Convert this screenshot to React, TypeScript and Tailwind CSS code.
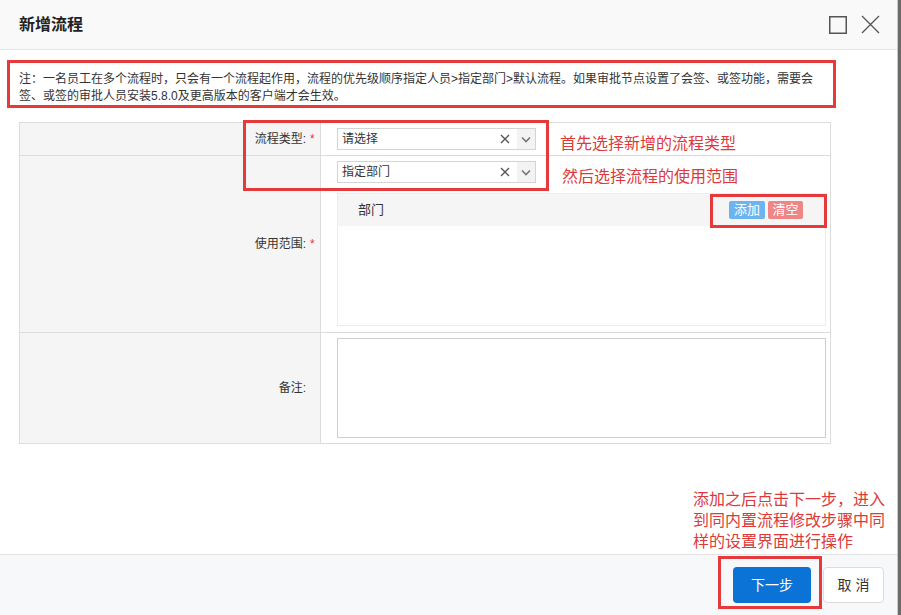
import React from "react";

const red = "#e5393b";

function SelectBox({ value }: { value: string }) {
  return (
    <div className="w-[199px] h-[22px] border border-[#d4d4d4] bg-white flex items-center">
      <span className="flex-1 pl-[4px] text-[12px] leading-[20px] text-[#333]">{value}</span>
      <svg width="10" height="10" viewBox="0 0 10 10" className="mr-[7px]">
        <path d="M1 1 L9 9 M9 1 L1 9" stroke="#555" strokeWidth="1.4" />
      </svg>
      <div className="w-[18px] h-full bg-[#f3f3f3] flex items-center justify-center">
        <svg width="10" height="7" viewBox="0 0 10 7">
          <path d="M1 1.5 L5 5.5 L9 1.5" stroke="#777" strokeWidth="1.6" fill="none" />
        </svg>
      </div>
    </div>
  );
}

function Label({ text, required }: { text: string; required?: boolean }) {
  return (
    <div className="w-[301px] shrink-0 bg-[#f5f5f5] border-r border-[#dcdcdc] flex items-center justify-end pr-[4px] text-[12px] text-[#333]">
      <span>{text}</span>
      <span className={`ml-[4px] w-[6px] text-[#e33] ${required ? "" : "invisible"}`}>*</span>
    </div>
  );
}

export default function App() {
  return (
    <div className="w-[901px] h-[615px] bg-[#6a6a6a] flex overflow-hidden font-['Liberation_Sans','Noto_Sans_CJK_SC',sans-serif]">
      <div className="w-[898px] h-full bg-white border-r border-[#c8c8c8] flex flex-col relative">
        {/* header */}
        <div className="h-[50px] shrink-0 bg-[#f9f9f9] border-b border-[#e6e6e6] flex items-center justify-between pl-[19px] pr-[17px]">
          <h2 className="text-[16px] font-bold text-[#222]">新增流程</h2>
          <div className="flex items-center gap-[14px]">
            <svg width="18" height="18" viewBox="0 0 18 18">
              <rect x="0.75" y="0.75" width="16.5" height="16.5" fill="none" stroke="#555" strokeWidth="1.5" />
            </svg>
            <svg width="19" height="19" viewBox="0 0 19 19">
              <path d="M1 1 L18 18 M18 1 L1 18" stroke="#555" strokeWidth="1.3" />
            </svg>
          </div>
        </div>

        {/* body */}
        <div className="flex-1">
          <div className="mt-[10px] ml-[7px] w-[829px] h-[48px] border-[3px] border-[#e5393b] pl-[9px] pt-[8px] text-[12px] leading-[17px] text-[#333]">
            注：一名员工在多个流程时，只会有一个流程起作用，流程的优先级顺序指定人员&gt;指定部门&gt;默认流程。如果审批节点设置了会签、或签功能，需要会
            <br />
            签、或签的审批人员安装5.8.0及更高版本的客户端才会生效。
          </div>

          <div className="mt-[14px] ml-[19px] w-[812px] border border-[#dcdcdc] border-b-0">
            <div className="h-[33px] flex border-b border-[#dcdcdc]">
              <Label text="流程类型:" required />
              <div className="flex-1 pl-[16px] pt-[5px]">
                <SelectBox value="请选择" />
              </div>
            </div>
            <div className="h-[177px] flex border-b border-[#dcdcdc]">
              <Label text="使用范围:" required />
              <div className="flex-1 pl-[16px] pt-[5px]">
                <SelectBox value="指定部门" />
                <div className="mt-[10px] w-[489px] h-[133px] border border-[#ececec]">
                  <div className="h-[32px] bg-[#f5f5f5] flex items-center justify-between pl-[20px] pr-[22px]">
                    <span className="text-[13px] text-[#333]">部门</span>
                    <div className="flex gap-[3px]">
                      <span className="w-[36px] h-[18px] rounded-[2px] bg-[#6cb4ef] text-white text-[13px] leading-[18px] flex items-center justify-center">添加</span>
                      <span className="w-[35px] h-[18px] rounded-[2px] bg-[#f08585] text-white text-[13px] leading-[18px] flex items-center justify-center">清空</span>
                    </div>
                  </div>
                </div>
              </div>
            </div>
            <div className="h-[111px] flex border-b border-[#dcdcdc]">
              <Label text="备注:" />
              <div className="flex-1 pl-[16px] pt-[5px]">
                <div className="w-[489px] h-[100px] border border-[#cfcfcf]" />
              </div>
            </div>
          </div>
        </div>

        {/* footer */}
        <div className="h-[61px] shrink-0 bg-[#f7f8fa] border-t border-[#e3e3e3] flex items-center justify-end pr-[13px] gap-[12px]">
          <button className="w-[78px] h-[36px] rounded-[4px] bg-[#0b73d5] text-white text-[14px]">下一步</button>
          <button className="w-[61px] h-[36px] rounded-[4px] bg-white border border-[#dcdcdc] text-[#333] text-[14px]">取 消</button>
        </div>

        {/* annotations */}
        <div className="absolute left-[243px] top-[120px] w-[306px] h-[71px] border-[3px]" style={{ borderColor: red }} />
        <div className="absolute left-[710px] top-[194px] w-[117px] h-[34px] border-[3px]" style={{ borderColor: red }} />
        <div className="absolute left-[718px] top-[556px] w-[104px] h-[53px] border-[3px]" style={{ borderColor: red }} />
        <div className="absolute left-[560px] top-[133px] text-[16px] leading-[22px] text-[#dc3a3a]">首先选择新增的流程类型</div>
        <div className="absolute left-[562px] top-[166px] text-[16px] leading-[22px] text-[#dc3a3a]">然后选择流程的使用范围</div>
        <div className="absolute left-[693px] top-[489px] w-[200px] text-[16px] leading-[21px] text-[#dc3a3a]">
          添加之后点击下一步，进入
          <br />
          到同内置流程修改步骤中同
          <br />
          样的设置界面进行操作
        </div>
      </div>
    </div>
  );
}
